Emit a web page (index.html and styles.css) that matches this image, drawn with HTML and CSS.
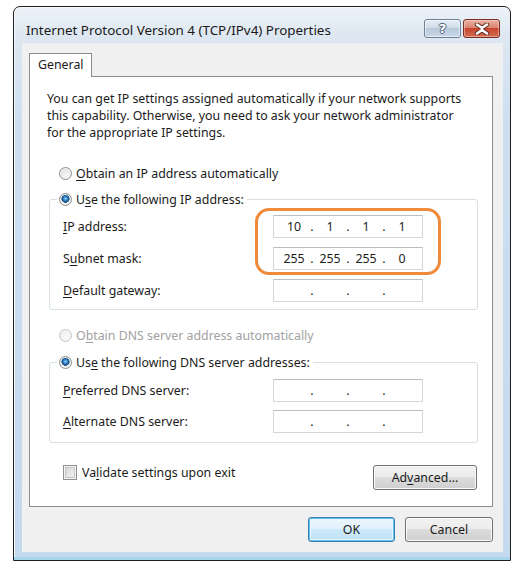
FILE: index.html
```html
<!DOCTYPE html>
<html>
<head>
<meta charset="utf-8">
<title>Internet Protocol Version 4 (TCP/IPv4) Properties</title>
<link rel="stylesheet" href="styles.css">
</head>
<body>
<div class="window">
  <div class="titlebar">
    <span class="title">Internet Protocol Version 4 (TCP/IPv4) Properties</span>
    <div class="caption-buttons">
      <span class="cbtn help"><span class="qmark">?</span></span>
      <span class="cbtn close">
        <svg width="16" height="12" viewBox="0 0 16 12">
          <path d="M3 1.5 L8 5 L13 1.5 M3 10.5 L8 7 L13 10.5" fill="none" stroke="#5a2a22" stroke-width="4.4" stroke-linecap="round"/>
          <path d="M3 1.5 L8 5 L13 1.5 M3 10.5 L8 7 L13 10.5 M8 5 L8 7" fill="none" stroke="#ffffff" stroke-width="2.6" stroke-linecap="round"/>
        </svg>
      </span>
    </div>
  </div>
  <div class="client">
    <div class="tabs"><div class="tab">General</div></div>
    <div class="panel">
      <p class="desc">You can get IP settings assigned automatically if your network supports<br>this capability. Otherwise, you need to ask your network administrator<br>for the appropriate IP settings.</p>

      <label class="radio-row first"><span class="radio"></span><span><u>O</u>btain an IP address automatically</span></label>

      <fieldset class="group ip-group">
        <legend><label class="radio-row"><span class="radio checked"></span><span>U<u>s</u>e the following IP address:</span></label></legend>
        <div class="fields">
          <div class="field"><span><u>I</u>P address:</span><div class="ipbox"><span class="seg">10</span><span class="dot">.</span><span class="seg">1</span><span class="dot">.</span><span class="seg">1</span><span class="dot">.</span><span class="seg">1</span></div></div>
          <div class="field"><span>S<u>u</u>bnet mask:</span><div class="ipbox"><span class="seg">255</span><span class="dot">.</span><span class="seg">255</span><span class="dot">.</span><span class="seg">255</span><span class="dot">.</span><span class="seg">0</span></div></div>
          <div class="field"><span><u>D</u>efault gateway:</span><div class="ipbox"><span class="seg"></span><span class="dot">.</span><span class="seg"></span><span class="dot">.</span><span class="seg"></span><span class="dot">.</span><span class="seg"></span></div></div>
          <div class="highlight"></div>
        </div>
      </fieldset>

      <label class="radio-row disabled dns-auto"><span class="radio"></span><span>O<u>b</u>tain DNS server address automatically</span></label>

      <fieldset class="group dns-group">
        <legend><label class="radio-row"><span class="radio checked"></span><span>Us<u>e</u> the following DNS server addresses:</span></label></legend>
        <div class="fields dns-fields">
          <div class="field"><span><u>P</u>referred DNS server:</span><div class="ipbox"><span class="seg"></span><span class="dot">.</span><span class="seg"></span><span class="dot">.</span><span class="seg"></span><span class="dot">.</span><span class="seg"></span></div></div>
          <div class="field"><span><u>A</u>lternate DNS server:</span><div class="ipbox"><span class="seg"></span><span class="dot">.</span><span class="seg"></span><span class="dot">.</span><span class="seg"></span><span class="dot">.</span><span class="seg"></span></div></div>
        </div>
      </fieldset>

      <div class="bottom-row">
        <label class="check-row"><span class="checkbox"></span><span>Va<u>l</u>idate settings upon exit</span></label>
        <button class="btn advanced">Ad<u>v</u>anced...</button>
      </div>
    </div>
    <div class="dialog-buttons">
      <button class="btn default">OK</button>
      <button class="btn">Cancel</button>
    </div>
  </div>
</div>
</body>
</html>
```
FILE: styles.css
```css
* { box-sizing: border-box; }
html, body { margin: 0; padding: 0; background: #ffffff; }
body {
  font-family: "Noto Sans", "Open Sans", sans-serif;
  font-size: 12.35px;
  color: #1b1b1b;
}
u { text-decoration: underline; text-underline-offset: 2px; }

.window {
  margin: 6px 0 0 13px;
  width: 498px;
  height: 555px;
  border: 1px solid #1f1f1f;
  border-radius: 7px 7px 0 0;
  background: linear-gradient(to bottom, #edf2f8 0, #dde7f1 30px, #cddef0 120px, #c3d9ef 100%);
  display: flex;
  flex-direction: column;
  box-shadow: inset 0 -3px 0 #a6d5ec, inset 1px 1px 0 #f7fafd;
}

.titlebar {
  height: 36px;
  display: flex;
  align-items: flex-start;
  padding: 12px 10px 0 12px;
}
.title {
  flex: 1;
  font-size: 13.4px;
  line-height: 18px;
  padding-top: 2px;
  color: #1a1a1a;
  white-space: nowrap;
}
.caption-buttons { display: flex; gap: 2px; }
.cbtn {
  width: 37px;
  height: 19px;
  border-radius: 3px;
  display: flex;
  align-items: center;
  justify-content: center;
}
.help {
  border: 1px solid #6f8196;
  background: linear-gradient(to bottom, #e6eef6 0, #d0dce8 45%, #b8c9db 50%, #c9d8e8 100%);
  box-shadow: inset 0 0 0 1px rgba(255,255,255,0.55);
}
.qmark {
  font-family: "DejaVu Sans", sans-serif;
  font-weight: bold;
  font-size: 13px;
  line-height: 13px;
  color: #ffffff;
  text-shadow: 1px 0 0 #4b5d72, -1px 0 0 #4b5d72, 0 1px 0 #4b5d72, 0 -1px 0 #4b5d72;
}
.close {
  border: 1px solid #7a2d25;
  background: linear-gradient(to bottom, #eab1a4 0, #dc8571 45%, #c8452f 50%, #d36a4f 100%);
  box-shadow: inset 0 0 0 1px rgba(255,230,220,0.45);
}

.client {
  flex: 1;
  margin: 0 7px 8px 8px;
  background: #f0f0f0;
  padding: 10px 10px 10px 7px;
  display: flex;
  flex-direction: column;
}
.tabs { display: flex; height: 23px; }
.tab {
  position: relative;
  z-index: 1;
  width: 63px;
  height: 24px;
  border: 1px solid #898c95;
  border-bottom: none;
  background: #ffffff;
  padding-left: 8px;
  line-height: 21px;
}
.panel {
  height: 431px;
  border: 1px solid #898c95;
  background: #ffffff;
  padding: 14px 14px 0 17px;
  display: flex;
  flex-direction: column;
}
.desc {
  margin: 0;
  line-height: 16.9px;
  white-space: nowrap;
}

.radio-row {
  display: flex;
  align-items: center;
  gap: 4px;
  height: 20px;
  white-space: nowrap;
}
.radio-row.first { margin: 21.5px 0 0 12px; }
.radio-row.dns-auto { margin: 15px 0 0 12px; }
.radio-row.disabled { color: #a2a2a2; }
.radio {
  width: 13px;
  height: 13px;
  border-radius: 50%;
  border: 1px solid #8b8d90;
  background: radial-gradient(circle at 60% 65%, #f7f7f7 0, #e4e4e4 60%, #d2d2d2 100%);
  box-shadow: inset 0 0 0 1px #f4f4f4;
}
.disabled .radio {
  border-color: #c3c5c8;
  background: radial-gradient(circle at 60% 65%, #fbfbfb 0, #efefef 70%, #e6e6e6 100%);
}
.radio.checked {
  background:
    radial-gradient(circle at 50% 42%, #a9dcff 0, #3d8fd4 1.6px, #1b5a95 3.2px, #17456f 3.9px, rgba(0,0,0,0) 4.3px),
    radial-gradient(circle at 60% 65%, #f7f7f7 0, #e4e4e4 60%, #d2d2d2 100%);
}

.group {
  margin: 0 0 0 2px;
  border: 1px solid #d5dfe5;
  border-radius: 3px;
  padding: 6px 0 7px 13px;
  min-width: 0;
}
.ip-group { margin-top: 6px; }
.dns-group { margin-top: 7px; padding-top: 7px; padding-bottom: 9px; }
.group legend {
  margin-left: -6px;
  padding: 0 3px 0 2px;
}

.fields {
  position: relative;
  display: flex;
  flex-direction: column;
  gap: 9px;
}
.dns-fields { gap: 8px; }
.field {
  display: grid;
  grid-template-columns: 210px 150px;
  align-items: center;
  height: 23px;
  white-space: nowrap;
}
.ipbox {
  height: 23px;
  border: 1px solid #d3d6da;
  border-top-color: #b9bcc1;
  background: #ffffff;
  display: flex;
  align-items: center;
  padding-left: 5px;
}
.seg { width: 30px; text-align: center; }
.dot { width: 6px; text-align: center; }
.highlight {
  position: absolute;
  left: 192px;
  top: -7px;
  width: 186px;
  height: 67px;
  border: 3px solid #ee8a3a;
  border-radius: 14px;
  pointer-events: none;
}

.bottom-row {
  margin-top: 21px;
  display: flex;
  justify-content: space-between;
  align-items: flex-start;
}
.check-row {
  margin-left: 16px;
  display: flex;
  align-items: center;
  gap: 5px;
  height: 16px;
  white-space: nowrap;
}
.checkbox {
  width: 14px;
  height: 15px;
  border: 1px solid #8e8f8f;
  background: linear-gradient(135deg, #cfcfcf 0, #e9e9e9 60%, #f6f6f6 100%);
  box-shadow: inset 0 0 0 1px #f4f4f4, inset 0 0 0 2px #c6c6c6;
}

.btn {
  font-family: "Noto Sans", "Open Sans", sans-serif;
  font-size: 12.35px;
  color: #1b1b1b;
  height: 25px;
  padding: 0;
  border: 1px solid #707070;
  border-radius: 3px;
  background: linear-gradient(to bottom, #f2f2f2 0, #ebebeb 50%, #dddddd 50%, #cfcfcf 100%);
  box-shadow: inset 0 0 0 1px #fbfbfb;
}
.advanced { width: 104px; margin: 1px 1px 0 0; }
.dialog-buttons {
  margin-top: 10px;
  display: flex;
  justify-content: flex-end;
  gap: 10px;
}
.dialog-buttons .btn { width: 88px; }
.dialog-buttons .btn.default { width: 87px; }
.btn.default {
  border-color: #3c7fb1;
  background: linear-gradient(to bottom, #eef7fd 0, #e0f1fc 50%, #cde9fa 50%, #bfe2f7 100%);
  box-shadow: inset 0 0 0 1px #5fc0ec, inset 0 0 0 2px #e8f6fe;
}
```
